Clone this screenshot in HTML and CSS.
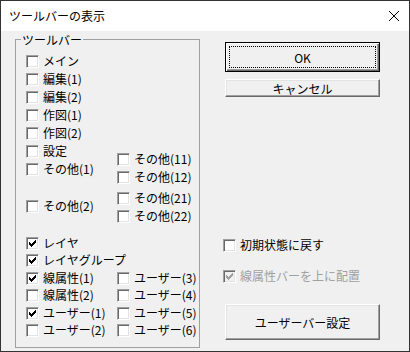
FILE: index.html
```html
<!DOCTYPE html>
<html lang="ja">
<head>
    <meta charset="UTF-8">
    <title>ツールバーの表示</title>
    <link rel="stylesheet" href="styles.css">
</head>
<body>
    <div class="window">
        <div class="titlebar">
            <span class="title">ツールバーの表示</span>
            <svg class="close" width="10" height="10" viewBox="0 0 10 10"><path d="M0 0L10 10M10 0L0 10" stroke="#000" stroke-width="1"/></svg>
        </div>
        <div class="dialog">
            <fieldset class="group">
                <legend>ツールバー</legend>
                <div class="upper">
                    <div class="col-left">
                        <div class="row"><span class="box"></span><span class="label">メイン</span></div>
                        <div class="row"><span class="box"></span><span class="label">編集(1)</span></div>
                        <div class="row"><span class="box"></span><span class="label">編集(2)</span></div>
                        <div class="row"><span class="box"></span><span class="label">作図(1)</span></div>
                        <div class="row"><span class="box"></span><span class="label">作図(2)</span></div>
                        <div class="row"><span class="box"></span><span class="label">設定</span></div>
                        <div class="row"><span class="box"></span><span class="label">その他(1)</span></div>
                        <div class="row gap-big"><span class="box"></span><span class="label">その他(2)</span></div>
                    </div>
                    <div class="col-right">
                        <div class="row"><span class="box"></span><span class="label">その他(11)</span></div>
                        <div class="row"><span class="box"></span><span class="label">その他(12)</span></div>
                        <div class="row gap-small"><span class="box"></span><span class="label">その他(21)</span></div>
                        <div class="row short"><span class="box"></span><span class="label">その他(22)</span></div>
                    </div>
                </div>
                <div class="lower">
                    <div class="row wide"><span class="box"><svg class="tick" width="7" height="7" viewBox="0 0 7 7"><path d="M6 0h1v1h-1zM5 1h2v1h-2zM0 2h1v1h-1zM4 2h3v1h-3zM0 3h2v1h-2zM3 3h3v1h-3zM0 4h5v1h-5zM1 5h3v1h-3zM2 6h1v1h-1z"/></svg></span><span class="label">レイヤ</span></div>
                    <div class="row wide"><span class="box"><svg class="tick" width="7" height="7" viewBox="0 0 7 7"><path d="M6 0h1v1h-1zM5 1h2v1h-2zM0 2h1v1h-1zM4 2h3v1h-3zM0 3h2v1h-2zM3 3h3v1h-3zM0 4h5v1h-5zM1 5h3v1h-3zM2 6h1v1h-1z"/></svg></span><span class="label">レイヤグループ</span></div>
                    <div class="row"><span class="box"><svg class="tick" width="7" height="7" viewBox="0 0 7 7"><path d="M6 0h1v1h-1zM5 1h2v1h-2zM0 2h1v1h-1zM4 2h3v1h-3zM0 3h2v1h-2zM3 3h3v1h-3zM0 4h5v1h-5zM1 5h3v1h-3zM2 6h1v1h-1z"/></svg></span><span class="label">線属性(1)</span></div>
                    <div class="row"><span class="box"></span><span class="label">ユーザー(3)</span></div>
                    <div class="row"><span class="box"></span><span class="label">線属性(2)</span></div>
                    <div class="row"><span class="box"></span><span class="label">ユーザー(4)</span></div>
                    <div class="row"><span class="box"><svg class="tick" width="7" height="7" viewBox="0 0 7 7"><path d="M6 0h1v1h-1zM5 1h2v1h-2zM0 2h1v1h-1zM4 2h3v1h-3zM0 3h2v1h-2zM3 3h3v1h-3zM0 4h5v1h-5zM1 5h3v1h-3zM2 6h1v1h-1z"/></svg></span><span class="label">ユーザー(1)</span></div>
                    <div class="row"><span class="box"></span><span class="label">ユーザー(5)</span></div>
                    <div class="row"><span class="box"></span><span class="label">ユーザー(2)</span></div>
                    <div class="row"><span class="box"></span><span class="label">ユーザー(6)</span></div>
                </div>
            </fieldset>
            <div class="side">
                <button class="btn btn-default btn-ok">OK</button>
                <button class="btn btn-cancel">キャンセル</button>
                <div class="row reset"><span class="box"></span><span class="label">初期状態に戻す</span></div>
                <div class="row disabled"><span class="box"><svg class="tick" width="7" height="7" viewBox="0 0 7 7"><path d="M6 0h1v1h-1zM5 1h2v1h-2zM0 2h1v1h-1zM4 2h3v1h-3zM0 3h2v1h-2zM3 3h3v1h-3zM0 4h5v1h-5zM1 5h3v1h-3zM2 6h1v1h-1z"/></svg></span><span class="label">線属性バーを上に配置</span></div>
                <button class="btn btn-userbar">ユーザーバー設定</button>
            </div>
        </div>
    </div>
</body>
</html>
```

FILE: styles.css
```css
body {
    margin: 0;
    font-family: "Noto Sans CJK JP", "Noto Sans", sans-serif;
    font-size: 12px;
    color: #000;
}
.window {
    width: 410px;
    height: 352px;
    box-sizing: border-box;
    border: 1px solid #333;
    background-color: #f0f0f0;
    display: flex;
    flex-direction: column;
}
.titlebar {
    height: 30px;
    flex: none;
    background-color: #fff;
    display: flex;
    align-items: center;
    justify-content: space-between;
    padding: 0 10px 0 8px;
}
.title {
    line-height: 14px;
}
.close {
    display: block;
}
.dialog {
    flex: 1;
    display: flex;
    align-items: flex-start;
    padding: 1px 0 0 14px;
}
.group {
    margin: 0;
    padding: 0 0 8px 0;
    width: 185px;
    min-width: 0;
    box-sizing: border-box;
    border: 1px solid #a0a0a0;
}
.group legend {
    margin-left: 5px;
    padding: 0 1px;
    line-height: 15px;
}
.upper {
    display: flex;
}
.col-left {
    width: 91px;
    padding: 5px 0 0 10px;
}
.col-right {
    padding-top: 103px;
}
.row {
    display: flex;
    align-items: center;
    height: 18px;
    white-space: nowrap;
}
.row.gap-big {
    margin-top: 19px;
}
.row.gap-small {
    margin-top: 3px;
}
.row.short {
    height: 17px;
}
.box {
    flex: none;
    width: 13px;
    height: 13px;
    margin-top: 1px;
    box-sizing: border-box;
    border: 1px solid;
    border-color: #a0a0a0 #fff #fff #a0a0a0;
    box-shadow: inset 1px 1px #696969, inset -1px -1px #e3e3e3;
    background-color: #fff;
    display: flex;
    align-items: center;
    justify-content: center;
}
.tick {
    display: block;
    fill: #000;
}
.label {
    margin-left: 4px;
    line-height: 14px;
}
.lower {
    display: grid;
    grid-template-columns: 91px auto;
    grid-auto-rows: 17.5px;
    padding-left: 10px;
    margin-top: 10px;
}
.lower .row {
    height: auto;
}
.lower .row.wide {
    grid-column: 1 / -1;
}
.side {
    display: flex;
    flex-direction: column;
    width: 157px;
    margin-left: 23px;
    padding-top: 10px;
}
.btn {
    margin-left: 2px;
    width: 155px;
    box-sizing: border-box;
    padding: 0;
    font: inherit;
    color: #000;
    background-color: #f0f0f0;
    border: 1px solid;
    border-color: #fff #696969 #696969 #fff;
    box-shadow: inset -1px -1px #a0a0a0, inset 1px 1px #e3e3e3;
}
.btn-default {
    border-color: #000;
    box-shadow: inset 1px 1px #fff, inset -1px -1px #696969, inset -2px -2px #a0a0a0;
    outline: 1px dotted #000;
    outline-offset: -5px;
}
.btn-ok {
    height: 30px;
}
.btn-cancel {
    height: 18px;
    margin-top: 7px;
}
.row.reset {
    margin-top: 139px;
}
.row.disabled {
    margin-top: 13px;
}
.row.disabled .box {
    background-color: #f0f0f0;
}
.row.disabled .tick {
    fill: #a0a0a0;
}
.row.disabled .label {
    color: #a0a0a0;
}
.btn-userbar {
    height: 36px;
    margin-top: 19px;
}
```
